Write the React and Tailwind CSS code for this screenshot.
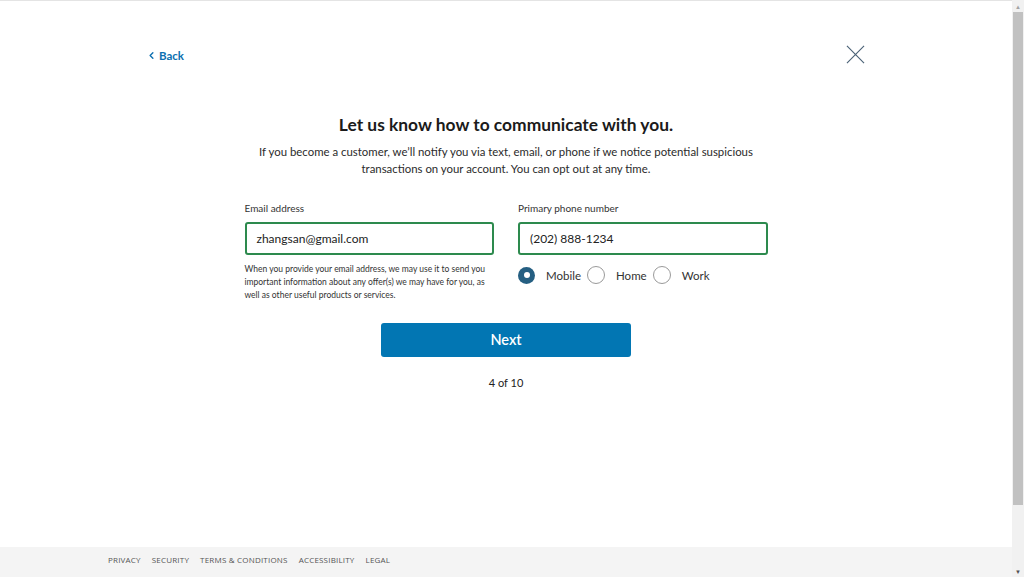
import { ChevronLeft } from "lucide-react";

const footerLinks = ["Privacy", "Security", "Terms & Conditions", "Accessibility", "Legal"];

function Radio({ label, checked }) {
  return (
    <label className="flex items-center gap-[11px]">
      {checked ? (
        <span className="h-[17px] w-[17px] rounded-full bg-[#255f82] grid place-items-center">
          <span className="h-[6px] w-[6px] rounded-full bg-white" />
        </span>
      ) : (
        <span className="h-[18px] w-[18px] rounded-full border border-[#9a9a9a] bg-white" />
      )}
      <span className="text-[11.5px] text-[#333]">{label}</span>
    </label>
  );
}

export default function App() {
  return (
    <div
      className="h-[577px] w-[1024px] flex overflow-hidden bg-white"
      style={{ fontFamily: 'Lato, "Open Sans", sans-serif' }}
    >
      <div className="flex-1 flex flex-col border-t border-[#e4e4e4]">
        <main className="flex-1 flex flex-col">
          {/* top bar */}
          <div className="flex items-center justify-between pl-[146px] pr-[147px] pt-[46px]">
            <button className="flex items-center gap-[2px] text-[11.5px] font-bold text-[#0d6fb0]">
              <ChevronLeft className="h-[11px] w-[11px]" strokeWidth={3} />
              Back
            </button>
            <svg width="19" height="19" viewBox="0 0 20 20" className="text-[#4b6277] -mt-[2px]">
              <path d="M1 1 L19 19 M19 1 L1 19" stroke="currentColor" strokeWidth="1.2" fill="none" />
            </svg>
          </div>

          {/* heading */}
          <div className="flex flex-col items-center text-center mt-[50px]">
            <h1 className="text-[17.4px] font-bold text-[#1b1b1b] leading-[22px]">
              Let us know how to communicate with you.
            </h1>
            <p className="mt-[7px] w-[540px] text-[11.4px] leading-[17px] text-[#2b2b2b]">
              If you become a customer, we’ll notify you via text, email, or phone if we notice potential suspicious transactions on your account. You can opt out at any time.
            </p>
          </div>

          {/* form */}
          <div className="mt-[24px] mx-auto grid grid-cols-2 gap-x-[24px] w-[523px]">
            <div>
              <div className="text-[10px] text-[#333] leading-[14px]">Email address</div>
              <div className="mt-[7px] h-[33px] rounded-[3px] border-2 border-[#2d8a4e] flex items-center px-[10px] text-[12px] text-[#222]">
                zhangsan@gmail.com
              </div>
              <p className="mt-[8px] text-[8.5px] leading-[13px] text-[#333]">
                When you provide your email address, we may use it to send you important information about any offer(s) we may have for you, as well as other useful products or services.
              </p>
            </div>
            <div>
              <div className="text-[10px] text-[#333] leading-[14px]">Primary phone number</div>
              <div className="mt-[7px] h-[33px] rounded-[3px] border-2 border-[#2d8a4e] flex items-center px-[10px] text-[12px] text-[#222]">
                (202) 888-1234
              </div>
              <div className="mt-[11px] flex items-center gap-[6px]">
                <Radio label="Mobile" checked />
                <Radio label="Home" />
                <Radio label="Work" />
              </div>
            </div>
          </div>

          <div className="flex flex-col items-center mt-[21px]">
            <button className="w-[250px] h-[34px] rounded-[3px] bg-[#0276b3] text-white text-[14.5px] font-semibold">
              Next
            </button>
            <div className="mt-[18px] text-[11px] text-[#222]">4 of 10</div>
          </div>
        </main>

        <footer
          className="h-[30px] bg-[#f4f4f4] flex items-center gap-[11px] pl-[108px] pb-[4px]"
          style={{ fontFamily: '"Open Sans", sans-serif' }}
        >
          {footerLinks.map((l) => (
            <a key={l} className="text-[8px] uppercase tracking-[0.2px] text-[#555]">
              {l}
            </a>
          ))}
        </footer>
      </div>

      {/* scrollbar */}
      <div className="w-[12px] bg-[#f1f1f1] flex flex-col items-center">
        <div className="h-[12px] flex items-center justify-center text-[6px] text-[#a3a3a3]">▲</div>
        <div className="w-[10px] h-[493px] bg-[#c1c1c1]" />
        <div className="flex-1" />
        <div className="h-[12px] flex items-center justify-center text-[6px] text-[#505050]">▼</div>
      </div>
    </div>
  );
}
